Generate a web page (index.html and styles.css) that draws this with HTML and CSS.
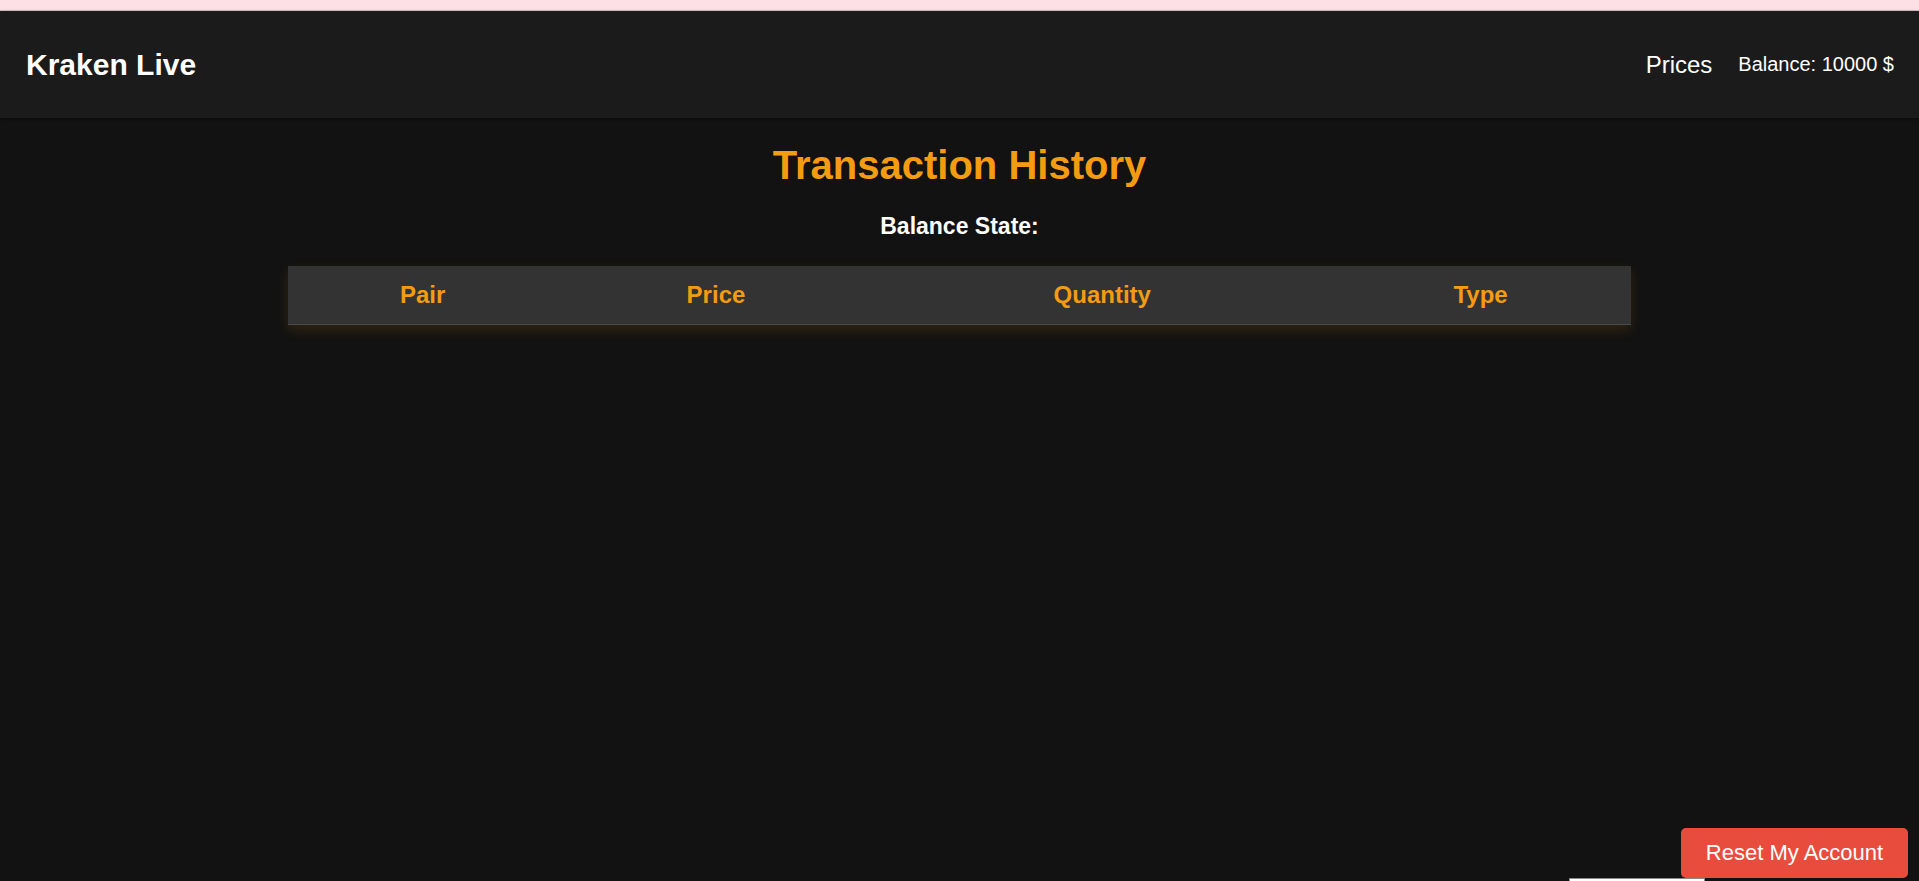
FILE: index.html
```html
<!DOCTYPE html>
<html lang="en">
<head>
<meta charset="utf-8">
<title>Kraken Live - Transaction History</title>
<link rel="stylesheet" href="styles.css">
</head>
<body>
<div class="top-strip"></div>
<nav class="navbar">
  <div class="brand">Kraken Live</div>
  <div class="nav-right">
    <a class="nav-link" href="#">Prices</a>
    <span class="balance">Balance: 10000 $</span>
  </div>
</nav>
<main class="content">
  <h1 class="title">Transaction History</h1>
  <h3 class="subtitle">Balance State:</h3>
  <table class="tx-table">
    <thead>
      <tr>
        <th>Pair</th>
        <th>Price</th>
        <th>Quantity</th>
        <th>Type</th>
      </tr>
    </thead>
    <tbody></tbody>
  </table>
</main>
<div class="peek-box"></div>
<button class="reset-btn" type="button">Reset My Account</button>
</body>
</html>
```

FILE: styles.css
```css
html, body {
  margin: 0;
  padding: 0;
}

body {
  background: #121212;
  color: #ffffff;
  font-family: "Liberation Sans", Arial, sans-serif;
  min-height: 881px;
  overflow: hidden;
}

.top-strip {
  height: 11px;
  background: #fde0e6;
  border-bottom: 1px solid #d9c3c8;
  box-sizing: border-box;
}

.navbar {
  height: 107px;
  background: #1b1b1b;
  display: flex;
  align-items: center;
  justify-content: space-between;
  padding: 0 25px 0 26px;
  box-shadow: 0 1px 3px rgba(0, 0, 0, 0.4);
}

.brand {
  font-size: 30px;
  font-weight: bold;
  color: #ffffff;
}

.nav-right {
  display: flex;
  align-items: center;
  gap: 26px;
}

.nav-link {
  font-size: 24px;
  color: #ffffff;
  text-decoration: none;
}

.balance {
  font-size: 20px;
  color: #ffffff;
}

.content {
  padding-top: 25px;
  text-align: center;
}

.title {
  margin: 0 0 25px;
  font-size: 40px;
  font-weight: bold;
  color: #f39c12;
}

.subtitle {
  margin: 0 0 26px;
  font-size: 23px;
  font-weight: bold;
  color: #ffffff;
}

.tx-table {
  width: 70%;
  margin: 0 auto;
  border-collapse: collapse;
  box-shadow: 0 5px 12px rgba(243, 156, 18, 0.14);
}

.tx-table th {
  background: #333333;
  color: #f39c12;
  font-size: 24px;
  font-weight: bold;
  padding: 15px;
  border-bottom: 1px solid #4a4a4a;
}

.peek-box {
  position: fixed;
  left: 1569px;
  top: 878px;
  width: 134px;
  height: 20px;
  background: #ffffff;
  border: 1px solid #8a8a8a;
}

.reset-btn {
  position: fixed;
  right: 11px;
  bottom: 3px;
  width: 227px;
  height: 50px;
  background: #e74c3c;
  color: #ffffff;
  border: none;
  border-radius: 5px;
  font-family: "Liberation Sans", Arial, sans-serif;
  font-size: 22px;
  padding: 0;
  cursor: pointer;
}
```
